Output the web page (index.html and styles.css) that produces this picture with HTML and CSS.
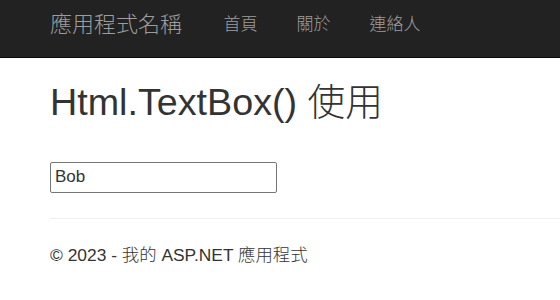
FILE: index.html
```html
<!DOCTYPE html>
<html lang="zh-Hant">
<head>
    <meta charset="UTF-8">
    <meta name="viewport" content="width=device-width, initial-scale=1.0">
    <title>Html.TextBox() 使用</title>
    <link rel="stylesheet" href="styles.css">
</head>
<body>
    <nav class="navbar">
        <div class="container navbar-inner">
            <a class="brand" href="#">應用程式名稱</a>
            <ul class="nav">
                <li><a href="#">首頁</a></li>
                <li><a href="#">關於</a></li>
                <li><a href="#">連絡人</a></li>
            </ul>
        </div>
    </nav>
    <div class="container body-content">
        <h1>Html.TextBox() 使用</h1>
        <input class="text-box" type="text" name="name" value="Bob">
        <hr>
        <footer>
            <p>&copy; 2023 - 我的 ASP.NET 應用程式</p>
        </footer>
    </div>
</body>
</html>
```

FILE: styles.css
```css
body {
    margin: 0;
    font-family: "Liberation Sans", Arial, "Noto Sans CJK TC", sans-serif;
    font-size: 17px;
    font-weight: 300;
    line-height: 20px;
    color: #333;
    background-color: #fff;
}
.container {
    padding-left: 50px;
}
.navbar {
    background-color: #222;
    border-bottom: 1px solid #080808;
    height: 57px;
}
.navbar-inner {
    display: flex;
    align-items: center;
    height: 100%;
    padding-bottom: 7px;
    box-sizing: border-box;
}
.brand {
    color: #9d9d9d;
    text-decoration: none;
    font-size: 22px;
    line-height: 24px;
    margin-right: 22px;
}
.nav {
    display: flex;
    list-style: none;
    margin: 0;
    padding: 0;
}
.nav a {
    display: block;
    padding: 0 19.5px;
    color: #9d9d9d;
    text-decoration: none;
}
h1 {
    font-weight: 300;
    font-size: 37.7px;
    line-height: 41.5px;
    margin: 24px 0 38px;
}
.text-box {
    display: block;
    width: 227px;
    height: 31px;
    box-sizing: border-box;
    border: 1px solid #767676;
    border-radius: 2px;
    padding: 1px 4px;
    font-family: inherit;
    font-size: 17px;
    font-weight: 400;
    color: #333;
}
hr {
    border: 0;
    border-top: 1px solid #eee;
    margin: 25px 0 0;
}
footer p {
    margin: 26px 0 0;
    font-size: 17.4px;
}
```
